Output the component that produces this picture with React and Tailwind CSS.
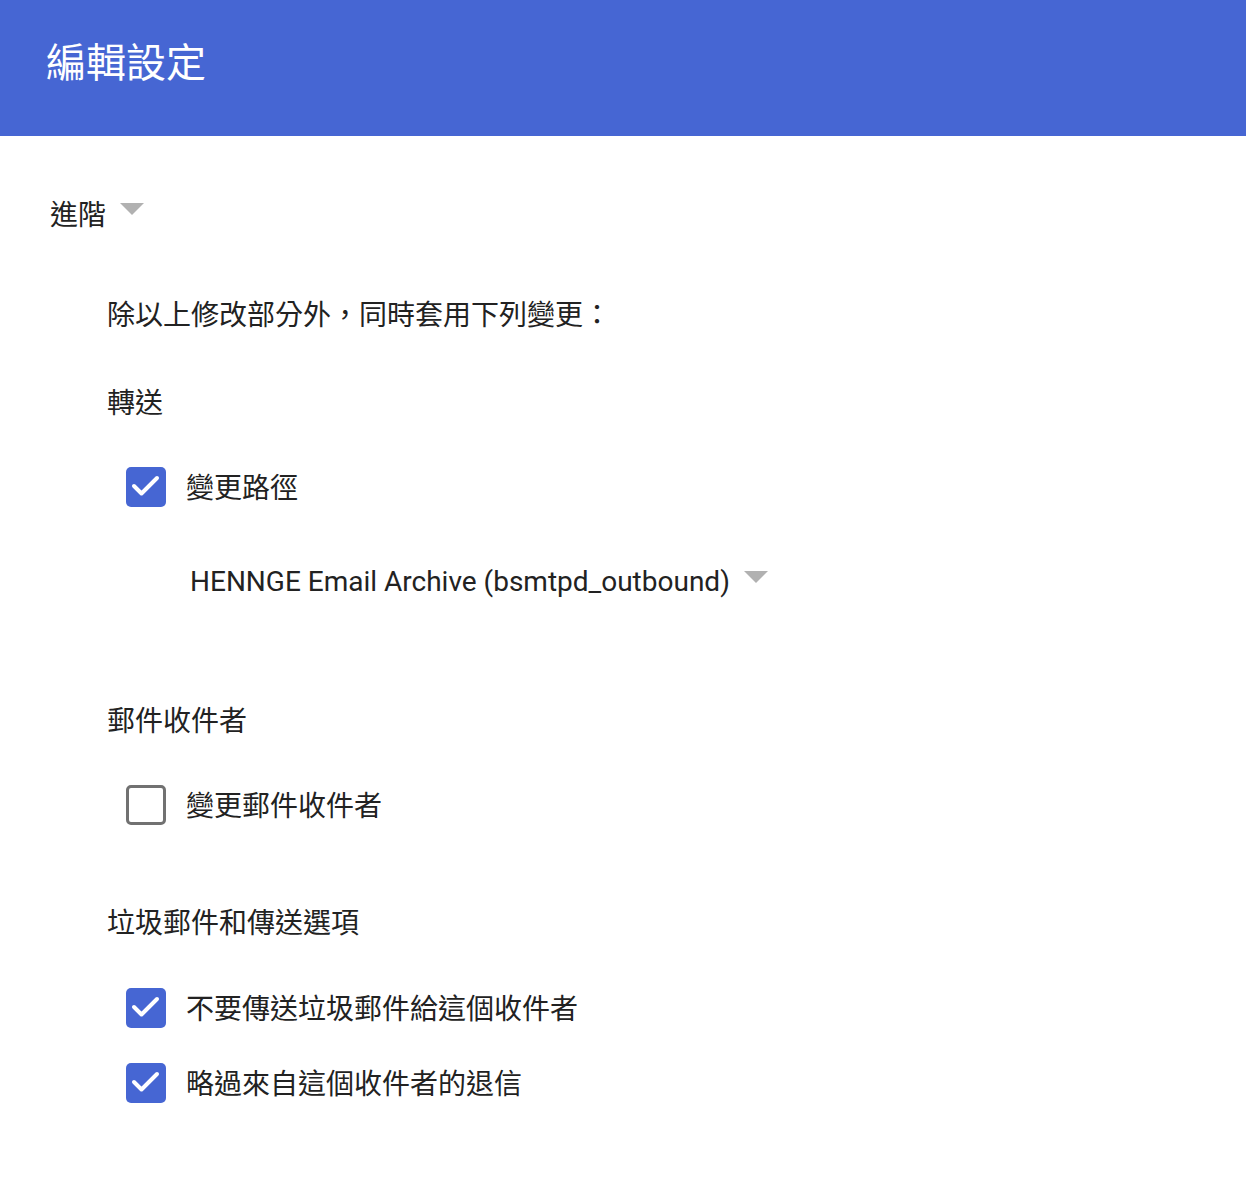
import React, { useState } from "react";

const Caret = ({ className = "" }) => (
  <span
    className={`inline-block w-0 h-0 border-l-[12px] border-r-[12px] border-t-[12px] border-l-transparent border-r-transparent border-t-[#b1b1b1] ${className}`}
  />
);

const Checkbox = ({ checked, onChange, label }) => (
  <label className="h-10 flex items-center gap-5 cursor-pointer select-none">
    <span
      onClick={onChange}
      className={
        checked
          ? "w-10 h-10 rounded-[5px] bg-[#4666d3] flex items-center justify-center"
          : "w-10 h-10 rounded-[5px] border-[3px] border-[#717171] bg-white"
      }
    >
      {checked && (
        <svg width="40" height="40" viewBox="0 0 40 40">
          <polyline
            points="8,19 15.5,26.5 31,11"
            fill="none"
            stroke="white"
            strokeWidth="4"
            strokeLinecap="round"
            strokeLinejoin="round"
          />
        </svg>
      )}
    </span>
    <span className="text-[28px] leading-10 pt-1 text-[#222]">{label}</span>
  </label>
);

const App = () => {
  const [reroute, setReroute] = useState(true);
  const [recipient, setRecipient] = useState(false);
  const [noSpam, setNoSpam] = useState(true);
  const [bypass, setBypass] = useState(true);

  return (
    <div className="min-h-screen bg-white font-['Roboto','Noto_Sans_CJK_TC',sans-serif]">
      <header className="h-[136px] bg-[#4666d3] pl-[46px] pr-12 pb-2 flex items-center">
        <h1 className="text-[40px] leading-none text-white font-normal">編輯設定</h1>
      </header>

      <section className="pl-[50px] pt-[58px] pb-20">
        <div className="h-10 flex items-center gap-[14px]">
          <span className="text-[28px] leading-10 pt-1 text-[#222]">進階</span>
          <Caret className="self-start mt-[9px]" />
        </div>

        <div className="pl-[57px] flex flex-col">
          <p className="mt-[60px] h-10 pt-1 flex items-center text-[28px] text-[#222]">
            除以上修改部分外，同時套用下列變更：
          </p>

          <p className="mt-12 h-10 pt-1 flex items-center text-[28px] text-[#222]">轉送</p>

          <div className="mt-[45px] pl-[19px]">
            <Checkbox
              checked={reroute}
              onChange={() => setReroute(!reroute)}
              label="變更路徑"
            />
          </div>

          <div className="mt-[54px] pl-[83px] h-10 flex items-center gap-[14px]">
            <span className="text-[28px] leading-10 pt-[2px] text-[#222] font-['Roboto',sans-serif]">
              HENNGE Email Archive (bsmtpd_outbound)
            </span>
            <Caret className="self-start mt-[10px]" />
          </div>

          <p className="mt-[99px] h-10 pt-1 flex items-center text-[28px] text-[#222]">郵件收件者</p>

          <div className="mt-[45px] pl-[19px]">
            <Checkbox
              checked={recipient}
              onChange={() => setRecipient(!recipient)}
              label="變更郵件收件者"
            />
          </div>

          <p className="mt-[77px] h-10 pt-1 flex items-center text-[28px] text-[#222]">
            垃圾郵件和傳送選項
          </p>

          <div className="mt-[46px] pl-[19px] flex flex-col gap-[35px]">
            <Checkbox
              checked={noSpam}
              onChange={() => setNoSpam(!noSpam)}
              label="不要傳送垃圾郵件給這個收件者"
            />
            <Checkbox
              checked={bypass}
              onChange={() => setBypass(!bypass)}
              label="略過來自這個收件者的退信"
            />
          </div>
        </div>
      </section>
    </div>
  );
};

export default App;
